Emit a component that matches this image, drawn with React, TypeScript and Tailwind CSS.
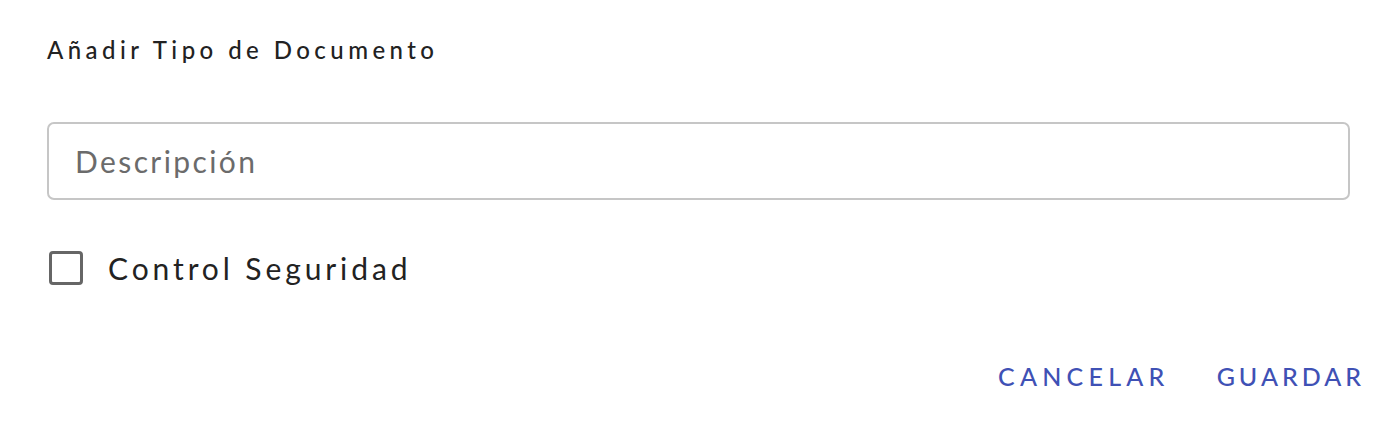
import * as React from 'react';

const App: React.FC = () => {
  const [checked, setChecked] = React.useState(false);

  return (
    <div className="h-[424px] w-[1396px] bg-white font-['Lato','Noto_Sans',sans-serif]">
      <div className="flex flex-col px-[47px] pt-[34px]">
        <h2 className="text-[24px] leading-[32px] font-medium tracking-[0.185em] text-[#222]">
          Añadir Tipo de Documento
        </h2>

        <input
          type="text"
          placeholder="Descripción"
          className="mt-[56px] h-[78px] w-[1303px] rounded-[7px] border-2 border-[#c6c6c6] px-[26px] text-[30px] tracking-[0.08em] text-[#222] outline-none placeholder:text-[#6b6b6b]"
        />

        <label className="mt-[50px] flex cursor-pointer items-center gap-[25px]">
          <span
            onClick={() => setChecked(!checked)}
            className="ml-[2px] flex h-[34px] w-[34px] items-center justify-center rounded-[4px] border-[3px] border-[#666]"
            aria-hidden
          >
            {checked && <span className="h-[18px] w-[18px] bg-[#3f51b5]" />}
          </span>
          <span className="text-[30px] leading-[36px] tracking-[0.13em] text-[#222]">Control Seguridad</span>
        </label>

        <div className="mt-[74px] mr-[-16px] flex justify-end gap-[47px]">
          <button className="text-[25px] leading-[32px] font-medium tracking-[0.21em] text-[#3f51b5]">CANCELAR</button>
          <button className="text-[25px] leading-[32px] font-medium tracking-[0.16em] text-[#3f51b5]">GUARDAR</button>
        </div>
      </div>
    </div>
  );
};

export default App;
